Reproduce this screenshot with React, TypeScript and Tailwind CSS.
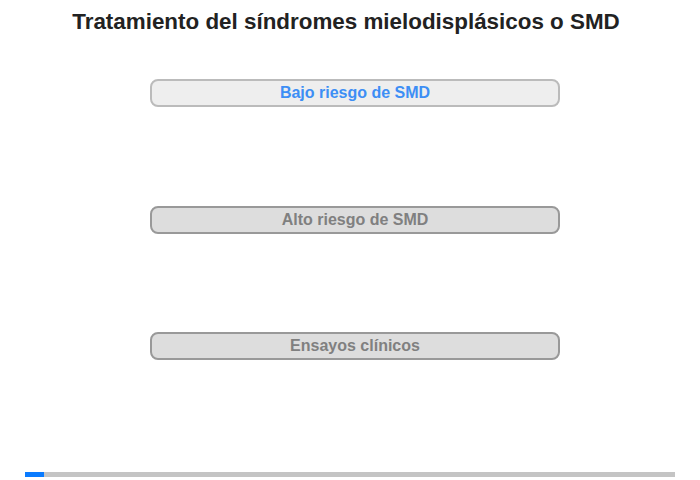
import React from 'react';

interface MenuItem {
  label: string;
  active?: boolean;
}

const items: MenuItem[] = [
  { label: 'Bajo riesgo de SMD', active: true },
  { label: 'Alto riesgo de SMD' },
  { label: 'Ensayos clínicos' },
];

const App: React.FC = () => {
  return (
    <div className="w-[700px] h-[480px] bg-white flex flex-col font-['Liberation_Sans',Arial,sans-serif]">
      {/* Title */}
      <h1 className="pt-[9px] pr-[8px] text-center text-[22.4px] leading-[26px] font-bold text-[#222]">
        Tratamiento del síndromes mielodisplásicos o SMD
      </h1>

      {/* Menu */}
      <div className="flex flex-col items-center gap-[98.5px] mt-[44px] pl-[10px]">
        {items.map((item) => (
          <button
            key={item.label}
            className={
              item.active
                ? 'w-[410px] h-[28px] rounded-[8px] border-2 border-[#bbbbbb] bg-[#eeeeee] text-[16px] font-bold text-[#3d8ef5]'
                : 'w-[410px] h-[28px] rounded-[8px] border-2 border-[#999999] bg-[#dddddd] text-[16px] font-bold text-[#808080]'
            }
          >
            {item.label}
          </button>
        ))}
      </div>

      {/* Progress */}
      <div className="mt-auto mb-[3px] mx-[25px] h-[5px] bg-[#c4c4c4] flex">
        <div className="w-[19px] h-full bg-[#0a7bff]" />
      </div>
    </div>
  );
};

export default App;
